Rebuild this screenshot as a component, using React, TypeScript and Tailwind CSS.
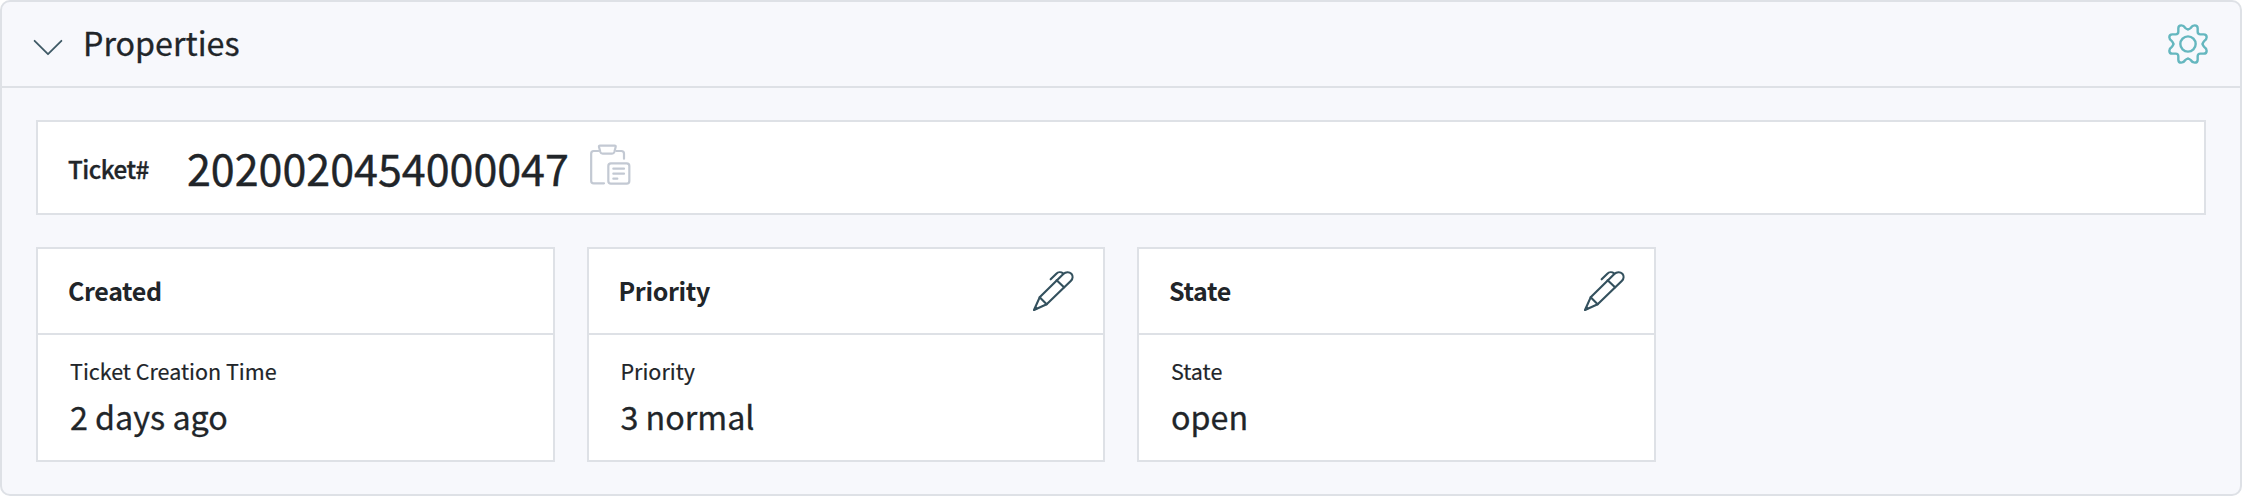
import React from "react";

function ChevronIcon() {
  return (
    <svg className="h-[18px] w-[30px]" viewBox="0 0 30 18" fill="none" stroke="#3f5a66" strokeWidth="1.8" strokeLinecap="round" strokeLinejoin="round">
      <path d="M1.6 2.8 15 16.2 28.4 2.8" />
    </svg>
  );
}

const GEAR_QUARTER =
  "M0-44Q-4-44-8-48Q-13-56-20-56Q-29-56-29-47L-29-37Q-29-29-37-29L-47-29Q-56-29-56-20Q-56-13-48-8Q-44-4-44 0";

function GearIcon() {
  return (
    <svg className="h-[42px] w-[42px]" viewBox="-63 -63 126 126" fill="none" stroke="#65b7bf" strokeWidth="7.2" strokeLinecap="round" strokeLinejoin="round">
      {[0, 90, 180, 270].map((angle) => (
        <path key={angle} d={GEAR_QUARTER} transform={`rotate(${angle})`} />
      ))}
      <circle r="23" />
    </svg>
  );
}

function ClipboardIcon() {
  return (
    <svg className="h-[42px] w-[42px]" viewBox="60 40 126 126" fill="none" stroke="#c3c9d3" strokeWidth="6.6" strokeLinecap="round" strokeLinejoin="round">
      <path d="M85 61H71Q63.500 61 63.500 69V150Q63.500 158 71 158H102" />
      <path d="M139 61H154Q162 61 162 69V84" />
      <path d="M90 45H134Q138 45 137 49L133 64Q131.500 69 126 69H98Q92.500 69 91 64L87 49Q86 45 90 45Z" />
      <rect x="115" y="98" width="63" height="61" rx="8" />
      <path d="M130 114H162M130 129H162M130 144H142" />
    </svg>
  );
}

function PenIcon() {
  return (
    <svg className="h-[42px] w-[42px]" viewBox="36 30 126 126" fill="none" stroke="#34515e" strokeWidth="6.4" strokeLinecap="round" strokeLinejoin="round">
      <path d="M42 150 59 112 130 42C137 35 148 35 154 41C159 47 159 56 153 62L80 133Z" />
      <path d="M59 112 80 133M110 61 132 82M92 58 109 41C114 36 123 35 129 40" />
      <path d="M42 150 47 139 53 145Z" fill="#34515e" strokeWidth="2" />
    </svg>
  );
}

interface PropertyCardProps {
  title: string;
  label: string;
  value: string;
  editable?: boolean;
}

function PropertyCard({ title, label, value, editable }: PropertyCardProps) {
  return (
    <section className="border-2 border-[#dee1e6] bg-white">
      <header className="flex h-[86px] items-center justify-between border-b-2 border-[#dee1e6] pl-[30px] pr-[29px]">
        <h2 className="pb-0.5 text-[25px] leading-8 font-bold tracking-[-0.35px]">{title}</h2>
        {editable && <PenIcon />}
      </header>
      <div className="px-8 pt-5 pb-[22px]">
        <p className="text-[21.5px] leading-8 [-webkit-text-stroke:0.2px]">{label}</p>
        <p className="mt-[7px] text-[32.25px] leading-[44px] [-webkit-text-stroke:0.3px]">{value}</p>
      </div>
    </section>
  );
}

export default function App() {
  return (
    <main className="bg-white font-['Noto_Sans_CJK_SC',sans-serif] text-[#212529]">
      <div className="h-[496px] rounded-[10px] border-2 border-[#dee1e6] bg-[#f7f8fc]">
        <header className="flex h-[86px] items-center border-b-2 border-[#dee1e6] px-[31px]">
          <div className="mt-[6px]"><ChevronIcon /></div>
          <h1 className="ml-5 flex-1 pb-1 text-[32.25px] leading-10 [-webkit-text-stroke:0.3px]">Properties</h1>
          <GearIcon />
        </header>
        <div className="px-[34px] pt-8">
          <div className="flex h-[95px] items-center border-2 border-[#dee1e6] bg-white pl-[30px]">
            <span className="w-[119px] pt-0.5 text-[24.2px] leading-8 font-medium tracking-[-0.5px] [-webkit-text-stroke:0.35px]">Ticket#</span>
            <span className="pb-0.5 text-[43px] leading-[60px] [-webkit-text-stroke:0.4px]">2020020454000047</span>
            <div className="mb-1.5 ml-[21px]"><ClipboardIcon /></div>
          </div>
          <div className="mt-8 grid grid-cols-4 gap-8">
            <PropertyCard title="Created" label="Ticket Creation Time" value="2 days ago" />
            <PropertyCard title="Priority" label="Priority" value="3 normal" editable />
            <PropertyCard title="State" label="State" value="open" editable />
          </div>
        </div>
      </div>
    </main>
  );
}
